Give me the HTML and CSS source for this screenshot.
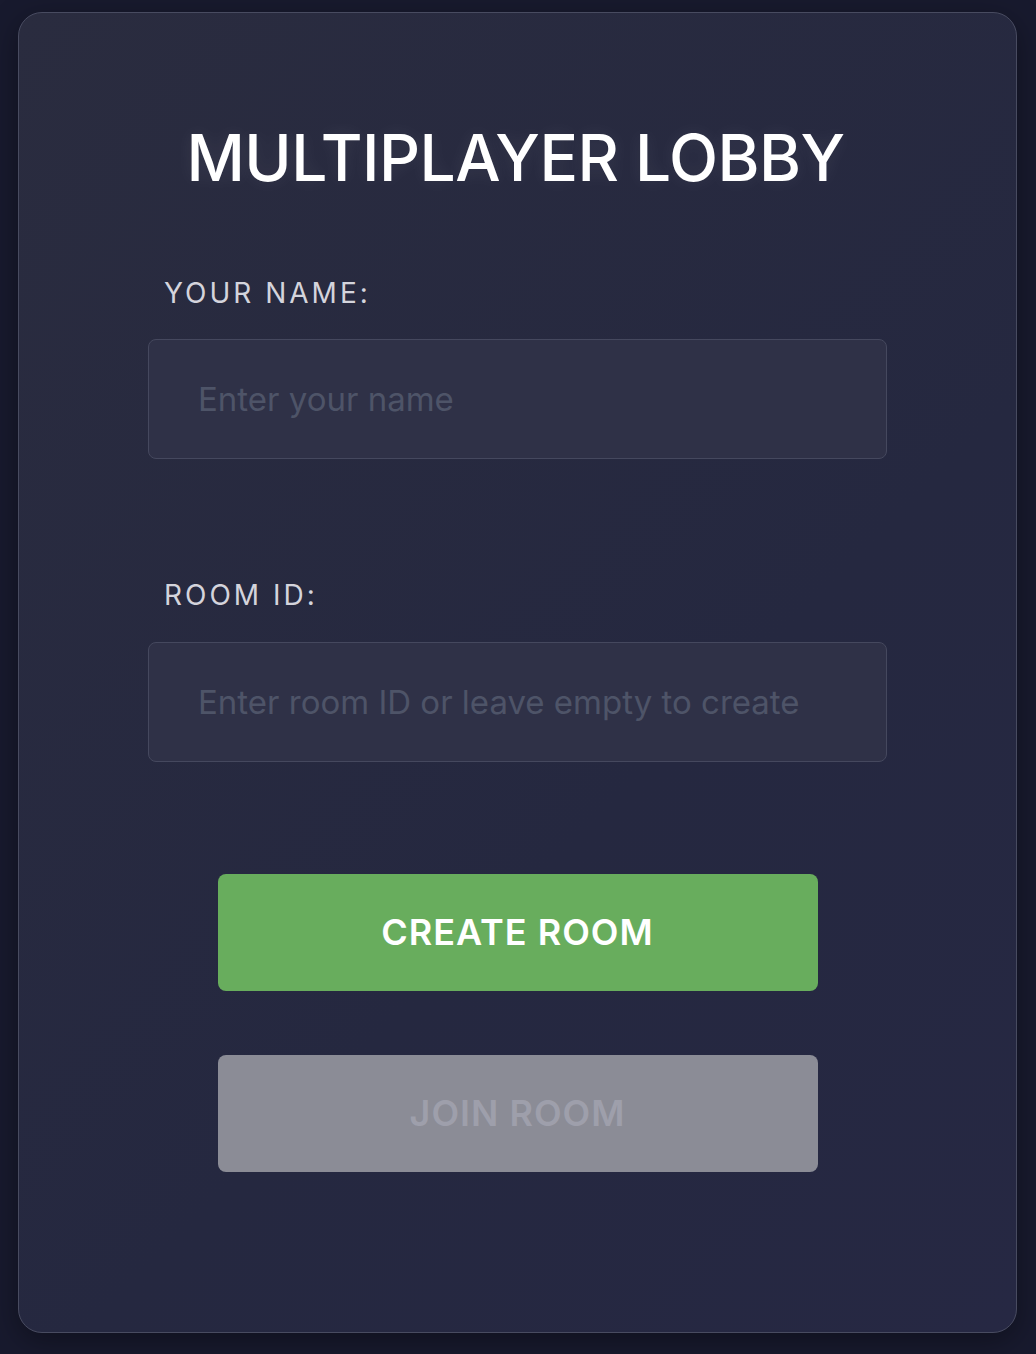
FILE: index.html
```html
<!DOCTYPE html>
<html lang="en">
<head>
<meta charset="utf-8">
<title>Multiplayer Lobby</title>
<link rel="stylesheet" href="styles.css">
</head>
<body>
<main class="card">
  <h1 class="title">MULTIPLAYER LOBBY</h1>
  <div class="field field-name">
    <label class="label" for="name">YOUR NAME:</label>
    <input class="input" id="name" type="text" placeholder="Enter your name">
  </div>
  <div class="field field-room">
    <label class="label" for="room">ROOM ID:</label>
    <input class="input" id="room" type="text" placeholder="Enter room ID or leave empty to create">
  </div>
  <div class="actions">
    <button class="btn btn-create" type="button">CREATE ROOM</button>
    <button class="btn btn-join" type="button" disabled>JOIN ROOM</button>
  </div>
</main>
</body>
</html>
```
FILE: styles.css
```css
* { box-sizing: border-box; }

html, body {
  margin: 0;
  height: 100%;
}

body {
  background: #181a2e;
  padding: 12px 20px 0 18px;
  font-family: "Inter", "Noto Sans", sans-serif;
}

.card {
  width: 999px;
  height: 1321px;
  border: 1px solid #484b60;
  border-radius: 24px;
  background: linear-gradient(135deg, #2a2c3f 0%, #252840 60%, #262843 100%);
  box-shadow: 0 8px 30px rgba(0, 0, 0, 0.35);
  padding: 107px 129px 0;
  display: flex;
  flex-direction: column;
  align-items: center;
}

.title {
  margin: 0 4px 0 0;
  font-size: 64px;
  line-height: 1.2;
  font-weight: 500;
  color: #ffffff;
  letter-spacing: -0.5px;
  text-shadow: 0 0 18px rgba(255, 255, 255, 0.08);
}

.field {
  width: 100%;
  display: flex;
  flex-direction: column;
  gap: 29px;
}

.field-name { margin-top: 80px; }
.field-room { margin-top: 120px; }

.label {
  padding-left: 16px;
  font-size: 28px;
  line-height: 1.2;
  font-weight: 400;
  color: #d4d4dc;
  letter-spacing: 3px;
}

.input {
  width: 100%;
  height: 120px;
  border: 1.5px solid #45485e;
  border-radius: 8px;
  background: #2f3147;
  padding: 0 49px;
  font-family: inherit;
  font-size: 33px;
  color: #e0e0e8;
  outline: none;
}

.input::placeholder {
  color: #4e5468;
}

.actions {
  margin-top: 112px;
  display: flex;
  flex-direction: column;
  gap: 64px;
}

.btn {
  width: 600px;
  height: 117px;
  border: none;
  border-radius: 8px;
  font-family: inherit;
  font-size: 36px;
  font-weight: 600;
  letter-spacing: 1px;
}

.btn-create {
  background: #68ad5d;
  color: #ffffff;
}

.btn-join {
  background: #8b8c96;
  color: #9e9fab;
}
```
